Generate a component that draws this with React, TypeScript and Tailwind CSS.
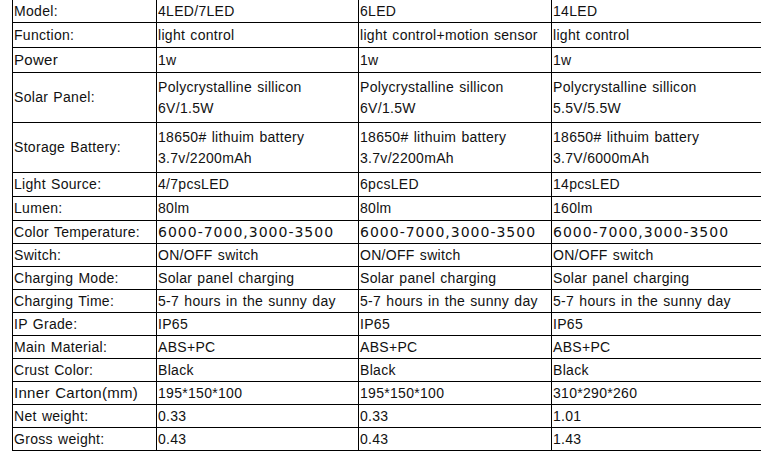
type Cell = string | string[];

type Row = {
  label: string;
  height: string;
  cells: Cell[];
  bigLabel?: boolean;
  wide?: boolean;
};

const rows: Row[] = [
  { label: 'Model:', height: 'h-[23px]', cells: ['4LED/7LED', '6LED', '14LED'] },
  {
    label: 'Function:',
    height: 'h-[25px]',
    cells: ['light control', 'light control+motion sensor', 'light control'],
  },
  { label: 'Power', height: 'h-[25px]', bigLabel: true, cells: ['1w', '1w', '1w'] },
  {
    label: 'Solar Panel:',
    height: 'h-[50px]',
    cells: [
      ['Polycrystalline sillicon', '6V/1.5W'],
      ['Polycrystalline sillicon', '6V/1.5W'],
      ['Polycrystalline sillicon', '5.5V/5.5W'],
    ],
  },
  {
    label: 'Storage Battery:',
    height: 'h-[50px]',
    cells: [
      ['18650# lithuim battery', '3.7v/2200mAh'],
      ['18650# lithuim battery', '3.7v/2200mAh'],
      ['18650# lithuim battery', '3.7V/6000mAh'],
    ],
  },
  { label: 'Light Source:', height: 'h-[24px]', cells: ['4/7pcsLED', '6pcsLED', '14pcsLED'] },
  { label: 'Lumen:', height: 'h-[24px]', cells: ['80lm', '80lm', '160lm'] },
  {
    label: 'Color Temperature:',
    height: 'h-[23px]',
    wide: true,
    cells: ['6000-7000,3000-3500', '6000-7000,3000-3500', '6000-7000,3000-3500'],
  },
  { label: 'Switch:', height: 'h-[23px]', cells: ['ON/OFF switch', 'ON/OFF switch', 'ON/OFF switch'] },
  {
    label: 'Charging Mode:',
    height: 'h-[23px]',
    cells: ['Solar panel charging', 'Solar panel charging', 'Solar panel charging'],
  },
  {
    label: 'Charging Time:',
    height: 'h-[23px]',
    cells: ['5-7 hours in the sunny day', '5-7 hours in the sunny day', '5-7 hours in the sunny day'],
  },
  { label: 'IP Grade:', height: 'h-[23px]', cells: ['IP65', 'IP65', 'IP65'] },
  { label: 'Main Material:', height: 'h-[23px]', cells: ['ABS+PC', 'ABS+PC', 'ABS+PC'] },
  { label: 'Crust Color:', height: 'h-[23px]', cells: ['Black', 'Black', 'Black'] },
  {
    label: 'Inner Carton(mm)',
    height: 'h-[23px]',
    bigLabel: true,
    cells: ['195*150*100', '195*150*100', '310*290*260'],
  },
  { label: 'Net weight:', height: 'h-[23px]', cells: ['0.33', '0.33', '1.01'] },
  { label: 'Gross weight:', height: 'h-[23px]', cells: ['0.43', '0.43', '1.43'] },
];

const colWidths = ['w-[202px]', 'w-[193px]', 'w-[210px]'];

function ValueCell({ value, width, wide }: { value: Cell; width: string; wide?: boolean }) {
  const lines = Array.isArray(value) ? value : [value];
  return (
    <div
      className={`${width} shrink-0 border-l border-black pl-px flex flex-col justify-center whitespace-nowrap ${
        wide ? "font-['DejaVu_Sans',sans-serif] text-[14px] tracking-[1px]" : ''
      }`}
    >
      {lines.map((line) => (
        <span key={line} className="leading-[21px]">
          {line}
        </span>
      ))}
    </div>
  );
}

export default function App() {
  return (
    <div className="w-[767px] h-[451px] overflow-hidden bg-white text-[#111] font-['Liberation_Sans',Arial,sans-serif] text-[14px] tracking-[0.3px] [word-spacing:1px]">
      <div className="ml-[12px] w-[749px] flex flex-col">
        {rows.map((row) => (
          <div key={row.label} className={`${row.height} flex border-b border-black`}>
            <div
              className={`w-[144px] shrink-0 border-l border-black pl-px flex items-center whitespace-nowrap ${
                row.bigLabel ? 'text-[15px]' : ''
              }`}
            >
              {row.label}
            </div>
            {row.cells.map((cell, i) => (
              <ValueCell key={i} value={cell} width={colWidths[i]} wide={row.wide} />
            ))}
          </div>
        ))}
      </div>
    </div>
  );
}
